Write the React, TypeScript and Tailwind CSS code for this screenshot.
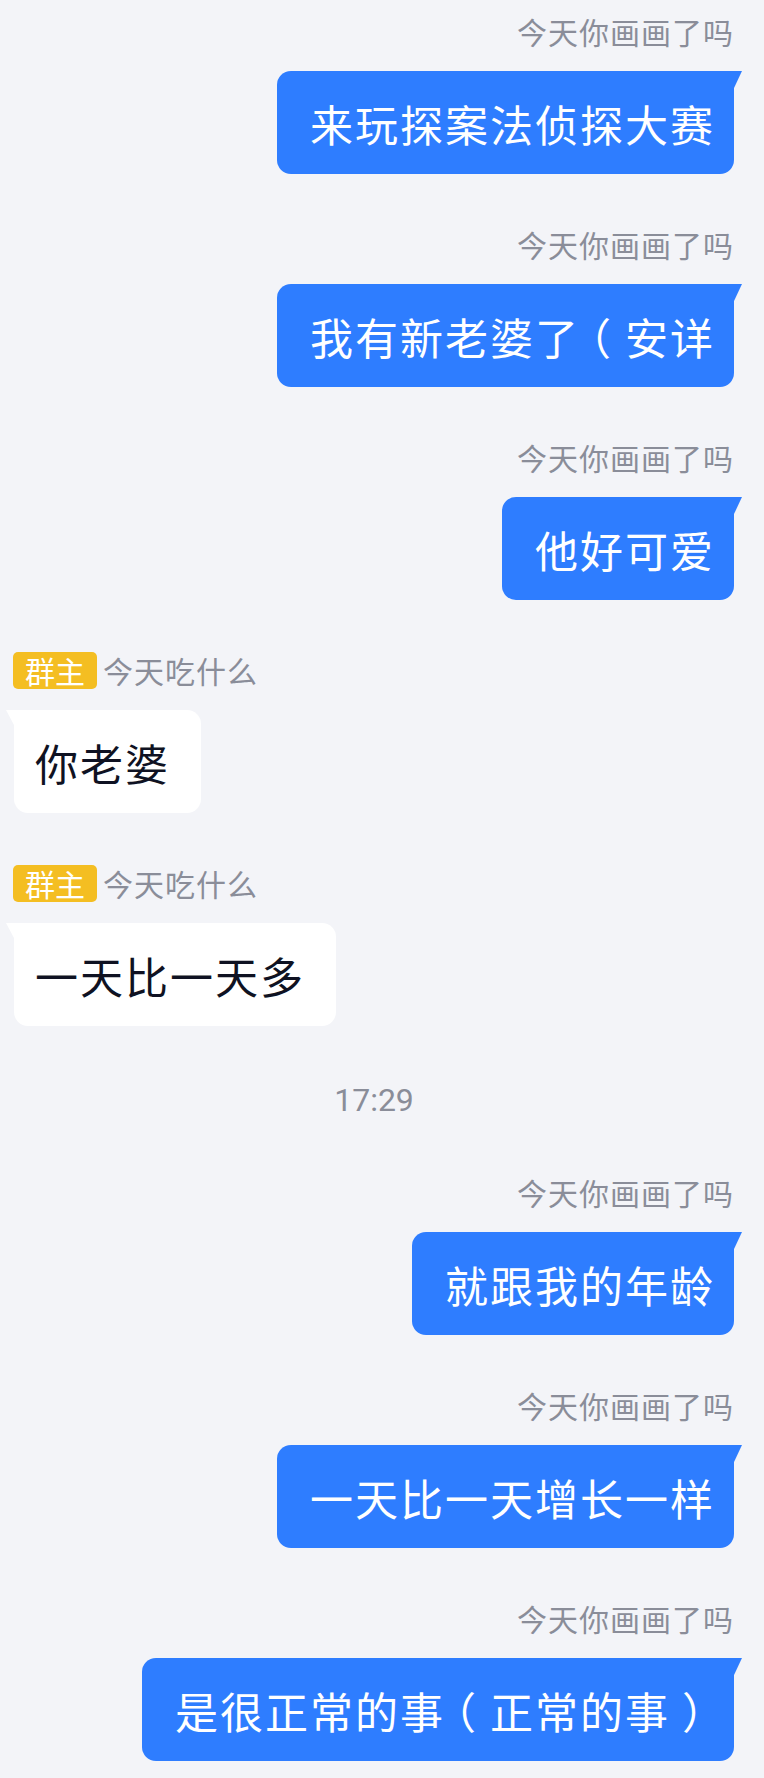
import React from "react";

const BLUE = "#2e7dff";

function Txt({ text }: { text: string }) {
  const parts = text.split(/([（）])/);
  return (
    <>
      {parts.map((p, i) =>
        p === "（" ? (
          <span key={i} className="-ml-[12px] mr-[12px]">{p}</span>
        ) : p === "）" ? (
          <span key={i} className="ml-[12px] -mr-[12px]">{p}</span>
        ) : (
          <span key={i}>{p}</span>
        )
      )}
    </>
  );
}

function RightMsg({ text }: { text: string }) {
  return (
    <div className="flex flex-col items-end">
      <div className="h-[40px] leading-[40px] text-[30px] tracking-[1px] text-[#8a8d99]">今天你画画了吗</div>
      <div className="relative mt-[20px] flex h-[103px] items-center rounded-[14px] rounded-tr-none bg-[#2e7dff] pl-[33px] pr-[19px] text-[43px] leading-[58px] tracking-[2px] text-white whitespace-nowrap">
        <span>
          <Txt text={text} />
        </span>
        <svg className="absolute -right-[8px] top-0" width="8" height="17" viewBox="0 0 8 17">
          <polygon points="0,0 8,0 0,17" fill={BLUE} />
        </svg>
      </div>
    </div>
  );
}

function LeftMsg({ text }: { text: string }) {
  return (
    <div className="flex flex-col items-start">
      <div className="flex h-[40px] items-center">
        <span className="-ml-[1px] flex h-[37px] items-center rounded-[5px] bg-[#f4be22] px-[12px] text-[30px] leading-[37px] text-white">群主</span>
        <span className="ml-[6px] text-[30px] leading-[40px] tracking-[1px] text-[#8a8d99]">今天吃什么</span>
      </div>
      <div className="relative mt-[20px] flex h-[103px] items-center rounded-[14px] rounded-tl-none bg-white pl-[21px] pr-[31px] text-[43px] leading-[58px] tracking-[2px] text-[#0f1222] whitespace-nowrap">
        <span>{text}</span>
        <svg className="absolute -left-[8px] top-0" width="8" height="15" viewBox="0 0 8 15">
          <polygon points="0,0 8,0 8,15" fill="#ffffff" />
        </svg>
      </div>
    </div>
  );
}

export default function App() {
  return (
    <div className="min-h-[1778px] w-[764px] bg-[#f3f4f8] pl-[14px] pr-[30px] pt-[11px] pb-[17px] font-['Noto_Sans_CJK_SC','Noto_Sans',sans-serif]">
      <div className="flex flex-col gap-[50px]">
        <RightMsg text="来玩探案法侦探大赛" />
        <RightMsg text="我有新老婆了（安详" />
        <RightMsg text="他好可爱" />
        <LeftMsg text="你老婆" />
        <LeftMsg text="一天比一天多" />
      </div>
      <div className="mt-[54px] flex h-[40px] items-center justify-center">
        <span className="font-['Roboto',sans-serif] text-[32px] leading-[40px] text-[#8a8d99]">17:29</span>
      </div>
      <div className="mt-[52px] flex flex-col gap-[50px]">
        <RightMsg text="就跟我的年龄" />
        <RightMsg text="一天比一天增长一样" />
        <RightMsg text="是很正常的事（正常的事）" />
      </div>
    </div>
  );
}
